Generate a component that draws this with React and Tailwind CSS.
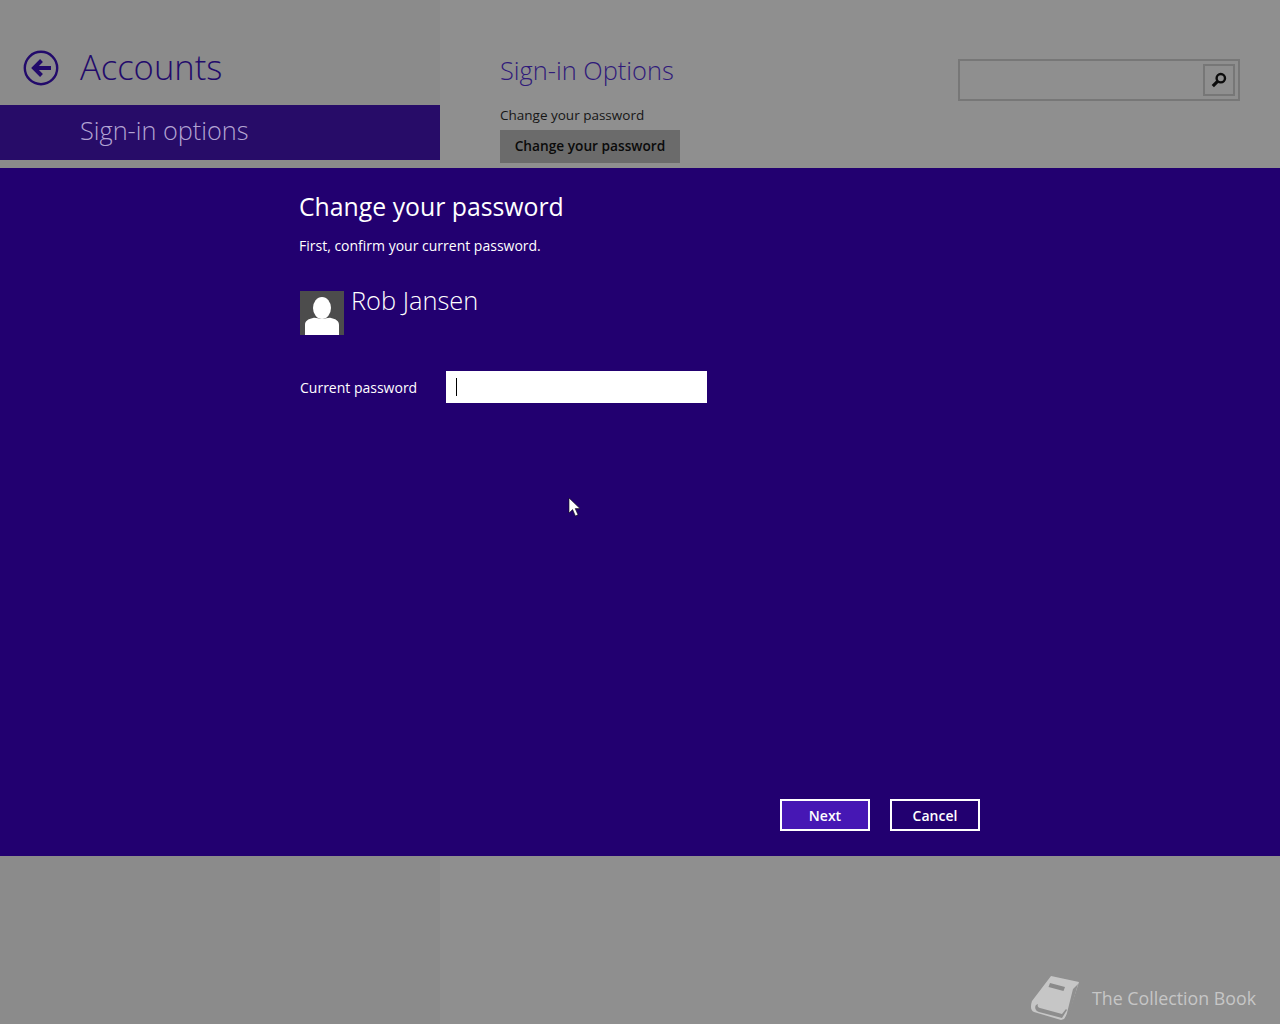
import React from 'react';

const BackIcon = () => (
  <svg width="36" height="36" viewBox="0 0 36 36" fill="none" stroke="#220a6b">
    <circle cx="18" cy="18" r="16.2" strokeWidth="2.4" />
    <path d="M28 18H11" strokeWidth="4" />
    <path d="M18.5 10.5L11 18l7.5 7.5" strokeWidth="4" />
  </svg>
);

const SearchIcon = () => (
  <svg width="16" height="16" viewBox="0 0 16 16" fill="none" stroke="#0c0c0c">
    <circle cx="9.8" cy="6.2" r="4.2" strokeWidth="2.4" />
    <path d="M6.6 9.4L1.8 14.2" strokeWidth="3.2" />
  </svg>
);

const UserTile = () => (
  <svg width="44" height="44" viewBox="0 0 44 44" className="block">
    <rect width="44" height="44" fill="#4c4c4c" />
    <ellipse cx="22" cy="17" rx="9" ry="11" fill="#ffffff" />
    <path d="M5 44V34c0-4 3-6 8-7 3-.6 5 1 9 1s6-1.6 9-1c5 1 8 3 8 7v10z" fill="#ffffff" />
  </svg>
);

const BookLogo = () => (
  <svg width="52" height="48" viewBox="0 0 52 48">
    <path d="M22 2l28 6-1 3-8 25-6 9-3 1-27-8C2 37 1 33 3 27z" fill="#c6c6c6" />
    <path d="M7 31c-2 3 0 6 3 7l23 6 5-8-1-1-4 5-22-6c-2-.6-3-2-2-4z" fill="#8d8d8d" />
    <path d="M21 9l15 4-1.5 4-15-4z" fill="#8a8a8a" />
    <path d="M44 15l5-5-9 32-5 6 3-9z" fill="#8f8f8f" />
  </svg>
);

const Cursor = () => (
  <svg width="13" height="20" viewBox="0 0 13 20">
    <path d="M1 1v15l3.6-3.4L7.4 19l2.6-1.2-2.8-6.2H12z" fill="#ffffff" stroke="#111111" strokeWidth="0.6" />
  </svg>
);

export default function App() {
  return (
    <div className="relative flex h-[1024px] w-[1280px] overflow-hidden bg-[#8f8f8f] font-['Open_Sans','Noto_Sans',sans-serif]">
      <aside className="h-full w-[440px] shrink-0 bg-[#8b8b8b]">
        <div className="flex h-[105px] items-start pt-[50px] pl-[23px]">
          <BackIcon />
          <h1 className="ml-[21px] mt-[-7px] text-[34.6px] leading-[48px] font-light text-[#220a6b]">Accounts</h1>
        </div>
        <div className="h-[55px] bg-[#270c68] pl-[80px] pt-[8px] text-[25.3px] leading-[34px] font-light text-[#b3a4d3]">
          Sign-in options
        </div>
      </aside>

      <main className="flex flex-1 items-start justify-between pl-[60px] pr-[40px]">
        <section className="pt-[52px]">
          <h2 className="text-[25.4px] leading-[36px] font-light text-[#2f1a7a]">Sign-in Options</h2>
          <p className="mt-[17px] text-[13.5px] leading-[20px] text-[#161616]">Change your password</p>
          <button className="mt-[5px] block h-[33px] w-[180px] bg-[#6b6b6b] text-[13.7px] font-semibold text-[#0a0a0a]">
            Change your password
          </button>
        </section>
        <div className="mt-[59px] flex h-[42px] w-[282px] justify-end border-2 border-[#777777] p-[3px]">
          <div className="flex h-[32px] w-[32px] items-center justify-center border-2 border-[#777777]">
            <SearchIcon />
          </div>
        </div>
      </main>

      <div className="absolute inset-x-0 top-[168px] flex h-[688px] flex-col bg-[#220070] pl-[299px] pr-[300px] text-white">
        <h2 className="mt-[20px] text-[24.8px] leading-[36px] font-normal">Change your password</h2>
        <p className="mt-[11px] text-[14px] leading-[22px]">First, confirm your current password.</p>
        <div className="mt-[34px] ml-px flex items-start">
          <UserTile />
          <span className="ml-[7px] mt-[-9px] text-[25.4px] leading-[36px] font-light">Rob Jansen</span>
        </div>
        <div className="mt-[36px] ml-px flex items-center">
          <label className="w-[146px] pt-[2px] text-[14px] leading-[20px]">Current password</label>
          <div className="flex h-[32px] w-[261px] items-center bg-white pl-[10px]">
            <span className="h-[18px] w-px bg-black" />
          </div>
        </div>
        <div className="mt-auto mb-[25px] flex justify-end gap-[20px]">
          <button className="h-[32px] w-[90px] border-2 border-white bg-[#4617b4] text-[14px] font-semibold">Next</button>
          <button className="h-[32px] w-[90px] border-2 border-white text-[14px] font-semibold">Cancel</button>
        </div>
      </div>

      <div className="absolute right-[24px] bottom-[2px] flex items-center gap-[11px]">
        <BookLogo />
        <span className="text-[17.8px] leading-[24px] text-[#c6c6c6]">The Collection Book</span>
      </div>

      <div className="absolute left-[568px] top-[497px]">
        <Cursor />
      </div>
    </div>
  );
}
